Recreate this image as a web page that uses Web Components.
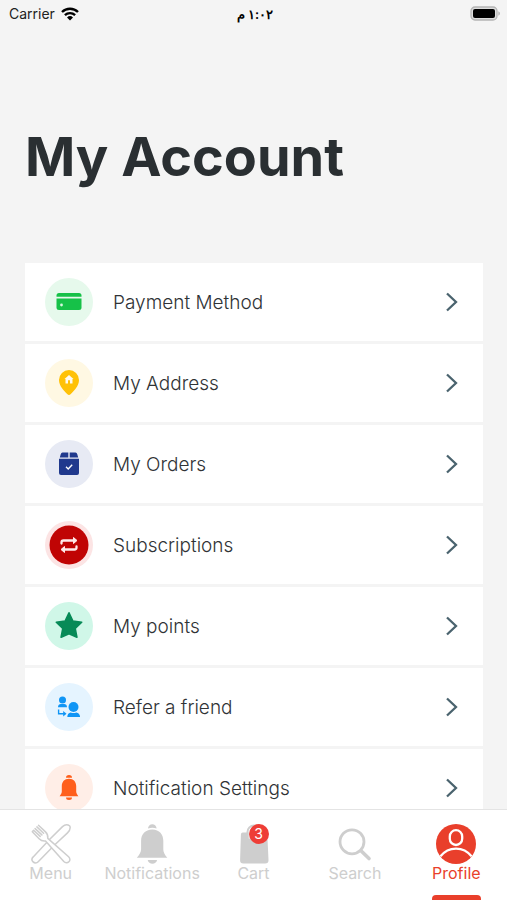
<!DOCTYPE html>
<html lang="en">
<head>
<meta charset="UTF-8">
<meta name="viewport" content="width=device-width, initial-scale=1">
<title>My Account</title>
<style>
  body {
    margin: 0;
    background: #f4f4f4;
    color: #2a2f32;
    font-family: Inter, "Noto Sans", sans-serif;
  }
</style>
</head>
<body>
<account-app>
  <status-bar slot="status" carrier="Carrier" time="١:٠٢ م"></status-bar>
  <h1 slot="title">My Account</h1>
  <account-item icon="card" tint="#e6f9ec">Payment Method</account-item>
  <account-item icon="pin" tint="#fff8e3">My Address</account-item>
  <account-item icon="box" tint="#e7eaf4">My Orders</account-item>
  <account-item icon="repeat" tint="#fce4e4">Subscriptions</account-item>
  <account-item icon="star" tint="#d0f7e8">My points</account-item>
  <account-item icon="refer" tint="#e5f4ff">Refer a friend</account-item>
  <account-item icon="bell" tint="#ffeee7">Notification Settings</account-item>
  <nav-tab slot="nav" icon="menu">Menu</nav-tab>
  <nav-tab slot="nav" icon="notifications">Notifications</nav-tab>
  <nav-tab slot="nav" icon="cart" badge="3">Cart</nav-tab>
  <nav-tab slot="nav" icon="search">Search</nav-tab>
  <nav-tab slot="nav" icon="profile" active>Profile</nav-tab>
</account-app>

<script>
// list icons, drawn on the 48px round tile
const itemIcons = {
  card: `
    <path fill="#16c148" d="M14 15h20a2.500 2.500 0 0 1 2.500 2.500v1.300h-25v-1.300A2.500 2.500 0 0 1 14 15z"/>
    <path fill="#16c148" d="M11.500 20.500h25v9A2.500 2.500 0 0 1 34 32H14a2.500 2.500 0 0 1-2.500-2.500z"/>
    <circle cx="16.500" cy="27" r="1.400" fill="#d8f8e0"/>`,
  pin: `
    <path fill="#ffc107" d="M24 11a10 10 0 0 1 10 10c0 6-5 10.500-8.200 14.100a2.400 2.400 0 0 1-3.600 0C19 31.500 14 27 14 21a10 10 0 0 1 10-10z"/>
    <path fill="#fffaf0" d="M24 16l4.500 4h-1v4.500h-2.500V22a1 1 0 0 0-2 0v2.500h-2.500V20h-1z"/>`,
  box: `
    <path fill="#20398d" d="M17.500 12.500h5.800v5H14.800l1-3.600a2 2 0 0 1 1.700-1.400zM24.700 12.500h5.800a2 2 0 0 1 1.700 1.400l1 3.600h-8.500z"/>
    <path fill="#20398d" d="M14 18.800h20V33a2 2 0 0 1-2 2H16a2 2 0 0 1-2-2z"/>
    <path fill="none" stroke="#fff" stroke-width="1.400" d="M21 26.800l2.200 2.100 4-4.200"/>`,
  repeat: `
    <circle cx="24" cy="24" r="19.500" fill="#c00404"/>
    <g fill="none" stroke="#ffe9e9" stroke-width="2.300" stroke-linecap="round" stroke-linejoin="round">
      <path d="M16.500 22.500v-1a2 2 0 0 1 2-2H30M31.500 25.500v1a2 2 0 0 1-2 2H18"/>
    </g>
    <path fill="#ffe9e9" stroke="#ffe9e9" stroke-linejoin="round" d="M28.500 16.500l3.500 3-3.500 3zM19.500 25.500L16 28.500l3.500 3z"/>`,
  star: `<path fill="#078a57" stroke="#078a57" stroke-width="1.600" stroke-linejoin="round" d="M24 10.800l3.900 8.200 8.800 1.200-6.500 6.300 1.700 8.700-7.900-3.400-7.900 3.400 1.700-8.700-6.500-6.300 8.800-1.200z"/>`,
  refer: `
    <g fill="#1095f5">
      <circle cx="17.500" cy="17" r="3.500"/>
      <path d="M13 24.300c0-2 1.400-3.200 2.700-3.200h3.600c1.300 0 2.700 1.200 2.700 3.200z"/>
      <circle cx="28.500" cy="24" r="5"/>
      <path d="M22.300 34c0-2.800 1.600-4.300 3.400-4.500 1.800.8 3.800.8 5.600 0 1.800.2 3.800 1.700 3.800 4.500z"/>
      <path d="M18.200 28l3.300 2.800-3.300 2.800z"/>
    </g>
    <path fill="none" stroke="#1095f5" stroke-width="1.400" d="M13.600 26.500v4.300h5.400"/>`,
  bell: `
    <g fill="#ff5f1b">
      <path d="M21 13.800a3 2.700 0 0 1 6 0z"/>
      <path d="M24 14.700c4.600 0 7.200 3.200 7.200 7.400v5.500c0 1.400.6 2.500 2.200 4.600H14.600c1.600-2.100 2.200-3.200 2.200-4.600v-5.500c0-4.200 2.600-7.400 7.200-7.400z"/>
      <path d="M21 33.600h6a3 2.500 0 0 1-6 0z"/>
    </g>`
};

// bottom bar icons, 40px box
const tabIcons = {
  menu: `
    <g fill="#fff" stroke="currentColor" stroke-width="1.500" stroke-linejoin="round" stroke-linecap="round">
      <path d="M18.500 15.500L31.500 2.600c2.300-2 5.400-2 7.300-.6 1 2.600-.3 5-2.300 6.900L23.300 21.200 7.200 37.800c-1.500 1.500-3.700 1.500-5.100.1s-1.400-3.500.1-5z"/>
      <path d="M7.500 1.200l7 6.700c2 2 2.600 4.300 2.300 6.500l20.800 18.400c1.600 1.500 1.700 3.600.3 5s-3.600 1.400-5.100-.2L14.500 17c-2.600.4-4.600-.4-6.400-2.200L1.300 7.700 2.600 6.200l6.600 6.200M4.100 4.600l6.800 6.300M5.900 2.900l6.700 6.400"/>
    </g>`,
  notifications: `
    <g fill="currentColor">
      <path d="M16 4.500a4.300 4.300 0 0 1 8.600 0c-2.700-1-5.900-1-8.600 0z"/>
      <path d="M20.300 5.500c7.200 0 11 5 11 11.200v8.500c0 2.800 1.200 5.200 4 8.600H4.800c2.800-3.400 4.300-5.800 4.300-8.600v-8.500c0-6.200 4-11.200 11.200-11.200z"/>
      <path d="M15.700 36h9.400c-.6 2.500-2.500 3.800-4.700 3.800s-4.100-1.300-4.700-3.800z"/>
    </g>`,
  cart: `
    <path fill="currentColor" d="M8.700 8.500h22.600a2 2 0 0 1 2 1.900l1.200 25.500a3.500 3.500 0 0 1-3.300 3.700H9.400a3.500 3.500 0 0 1-3.300-3.700l.8-25.500a2 2 0 0 1 1.800-1.900z"/>
    <path fill="none" stroke="#fff" stroke-width="2" d="M15.500 8.500v6"/>
    <path fill="none" stroke="currentColor" stroke-width="2" d="M13.500 15V8a6.500 6.500 0 0 1 13 0v6"/>`,
  search: `
    <g fill="none" stroke="currentColor" stroke-width="2.800" stroke-linecap="round">
      <circle cx="17" cy="17.800" r="12"/>
      <path stroke-width="3.600" d="M26.500 27.300l7.500 7.200"/>
    </g>`,
  profile: `
    <circle cx="20" cy="20" r="20" fill="currentColor"/>
    <g fill="none" stroke="#fff" stroke-width="2.300">
      <rect x="13.800" y="6.200" width="12.400" height="14.800" rx="6.200"/>
      <path d="M4.500 32.300C12.500 22 27.500 22 35.500 32.300"/>
    </g>`
};

class StatusBar extends HTMLElement {
  connectedCallback() {
    this.attachShadow({ mode: 'open' });
    this.shadowRoot.innerHTML = `
      <style>
        :host {
          display: grid;
          grid-template-columns: 1fr auto 1fr;
          align-items: center;
          height: 27px;
          padding: 0 6px 0 9px;
          color: #222;
          font-size: 14px;
        }
        .carrier {
          display: flex;
          align-items: center;
          gap: 6px;
        }
        .time {
          color: #000;
          font-size: 13px;
          font-weight: 600;
        }
        .battery {
          justify-self: end;
        }
        svg {
          display: block;
        }
      </style>
      <div class="carrier">
        <span>${this.getAttribute('carrier')}</span>
        <svg width="18" height="14" viewBox="0 0 18 14" aria-hidden="true">
          <path fill="none" stroke="#000" stroke-width="2.400" d="M1 5a11.500 11.500 0 0 1 16 0M3.900 8.200a7.400 7.400 0 0 1 10.200 0"/>
          <path d="M9 13.600l-3-3.200a4.300 4.300 0 0 1 6 0z"/>
        </svg>
      </div>
      <span class="time" dir="rtl" lang="ar">${this.getAttribute('time')}</span>
      <svg class="battery" width="31" height="16" viewBox="0 0 31 16" aria-hidden="true">
        <rect x="1" y="1" width="26" height="13" rx="4" fill="#ddd" stroke="#b4b4b4" stroke-width="1.300"/>
        <rect x="3" y="3" width="22" height="9" rx="2"/>
        <path fill="#b4b4b4" d="M28.300 5.300c2.200.8 2.200 3.600 0 4.400z"/>
      </svg>
    `;
  }
}
customElements.define('status-bar', StatusBar);

class AccountItem extends HTMLElement {
  connectedCallback() {
    this.attachShadow({ mode: 'open' });
    this.shadowRoot.innerHTML = `
      <style>
        :host {
          display: block;
        }
        button {
          display: flex;
          align-items: center;
          gap: 20px;
          width: 100%;
          height: 78px;
          padding: 0 24px 0 20px;
          border: 0;
          background: #fff;
          color: #303336;
          font: inherit;
          font-size: 19px;
          font-weight: 300;
          text-align: left;
          cursor: pointer;
        }
        .tile {
          flex: none;
          border-radius: 50%;
          background: ${this.getAttribute('tint')};
        }
        .label {
          flex: 1;
        }
      </style>
      <button type="button">
        <svg class="tile" width="48" height="48" viewBox="0 0 48 48" aria-hidden="true">${itemIcons[this.getAttribute('icon')]}</svg>
        <span class="label"><slot></slot></span>
        <svg width="14" height="20" viewBox="0 0 14 20" aria-hidden="true">
          <path fill="none" stroke="#4a636e" stroke-width="2.300" d="M2 1.500l9 8.500-9 8.500"/>
        </svg>
      </button>
    `;
  }
}
customElements.define('account-item', AccountItem);

class NavTab extends HTMLElement {
  connectedCallback() {
    const badge = this.getAttribute('badge');
    this.attachShadow({ mode: 'open' });
    this.shadowRoot.innerHTML = `
      <style>
        :host {
          display: block;
          flex: 1;
          min-width: 0;
          color: #cecece;
        }
        :host([active]) {
          color: #e93f2b;
        }
        a {
          display: flex;
          flex-direction: column;
          align-items: center;
          height: 100%;
          box-sizing: border-box;
          padding-top: 14px;
          color: inherit;
          font-size: 16px;
          line-height: 18px;
          text-decoration: none;
        }
        .icon {
          position: relative;
          width: 40px;
          height: 40px;
        }
        svg {
          display: block;
        }
        .badge {
          position: absolute;
          top: 0;
          right: 5px;
          width: 20px;
          border-radius: 10px;
          background: #ee3d36;
          color: #fff;
          font-size: 14px;
          line-height: 20px;
          text-align: center;
        }
        .bar {
          display: none;
          width: 49px;
          height: 5px;
          margin-top: auto;
          border-radius: 4px 4px 0 0;
          background: currentColor;
        }
        :host([active]) .bar {
          display: block;
        }
      </style>
      <a href="#${this.getAttribute('icon')}">
        <span class="icon">
          <svg width="40" height="40" viewBox="0 0 40 40" aria-hidden="true">${tabIcons[this.getAttribute('icon')]}</svg>
          ${badge ? `<span class="badge">${badge}</span>` : ''}
        </span>
        <span><slot></slot></span>
        <span class="bar"></span>
      </a>
    `;
  }
}
customElements.define('nav-tab', NavTab);

class AccountApp extends HTMLElement {
  connectedCallback() {
    this.attachShadow({ mode: 'open' });
    this.shadowRoot.innerHTML = `
      <style>
        :host {
          display: flex;
          flex-direction: column;
          height: 100vh;
        }
        main {
          flex: 1;
          min-height: 0;
          overflow-y: auto;
          scrollbar-width: none;
        }
        ::slotted(h1) {
          margin: 0;
          padding: 96px 25px 72px;
          font-size: 54px;
          line-height: 68px;
          font-weight: 700;
        }
        .list {
          display: flex;
          flex-direction: column;
          gap: 3px;
          margin: 0 24px 24px 25px;
        }
        nav {
          display: flex;
          height: 90px;
          border-top: 1px solid #e4e4e4;
          background: #fff;
        }
      </style>
      <slot name="status"></slot>
      <main>
        <slot name="title"></slot>
        <div class="list"><slot></slot></div>
      </main>
      <nav><slot name="nav"></slot></nav>
    `;
  }
}
customElements.define('account-app', AccountApp);
</script>
</body>
</html>
